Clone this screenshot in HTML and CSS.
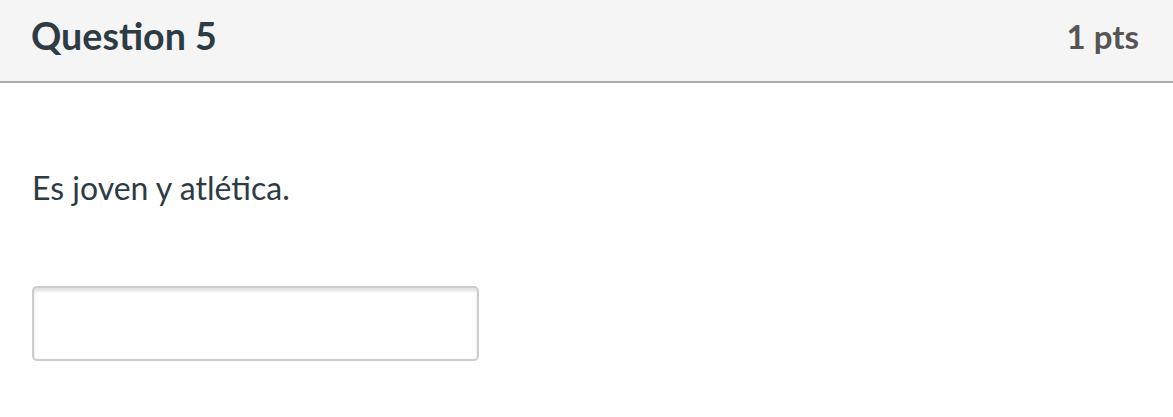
FILE: index.html
```html
<!DOCTYPE html>
<html lang="en">
<head>
    <meta charset="UTF-8">
    <title>Question 5</title>
    <link rel="stylesheet" href="styles.css">
</head>
<body>
    <div class="question">
        <div class="question-header">
            <h2 class="question-title">Question 5</h2>
            <span class="question-points">1 pts</span>
        </div>
        <div class="question-body">
            <p class="question-text">Es joven y atlética.</p>
            <input type="text" class="answer-input" aria-label="Answer">
        </div>
    </div>
</body>
</html>
```
FILE: styles.css
```css
body {
    margin: 0;
    font-family: 'Lato', 'Liberation Sans', sans-serif;
    background: #fff;
    color: #2d3b45;
}
.question-header {
    display: flex;
    justify-content: space-between;
    align-items: flex-start;
    box-sizing: border-box;
    height: 83px;
    padding: 14px 34px 0 31px;
    background: #f5f5f5;
    border-bottom: 2px solid #aaa;
}
.question-title {
    margin: 0;
    font-size: 37.6px;
    line-height: 44px;
    font-weight: bold;
    color: #2d3b45;
}
.question-points {
    margin-top: 2px;
    font-size: 33px;
    line-height: 40px;
    font-weight: bold;
    color: #555;
}
.question-body {
    padding: 85px 32px 0;
}
.question-text {
    margin: 0 0 78px;
    font-size: 32px;
    line-height: 40px;
}
.answer-input {
    display: block;
    box-sizing: border-box;
    width: 447px;
    height: 75px;
    margin: 0;
    border: 2px solid #ccc;
    border-radius: 5px;
    box-shadow: inset 0 3px 3px rgba(0, 0, 0, 0.12);
    background: #fff;
}
```
